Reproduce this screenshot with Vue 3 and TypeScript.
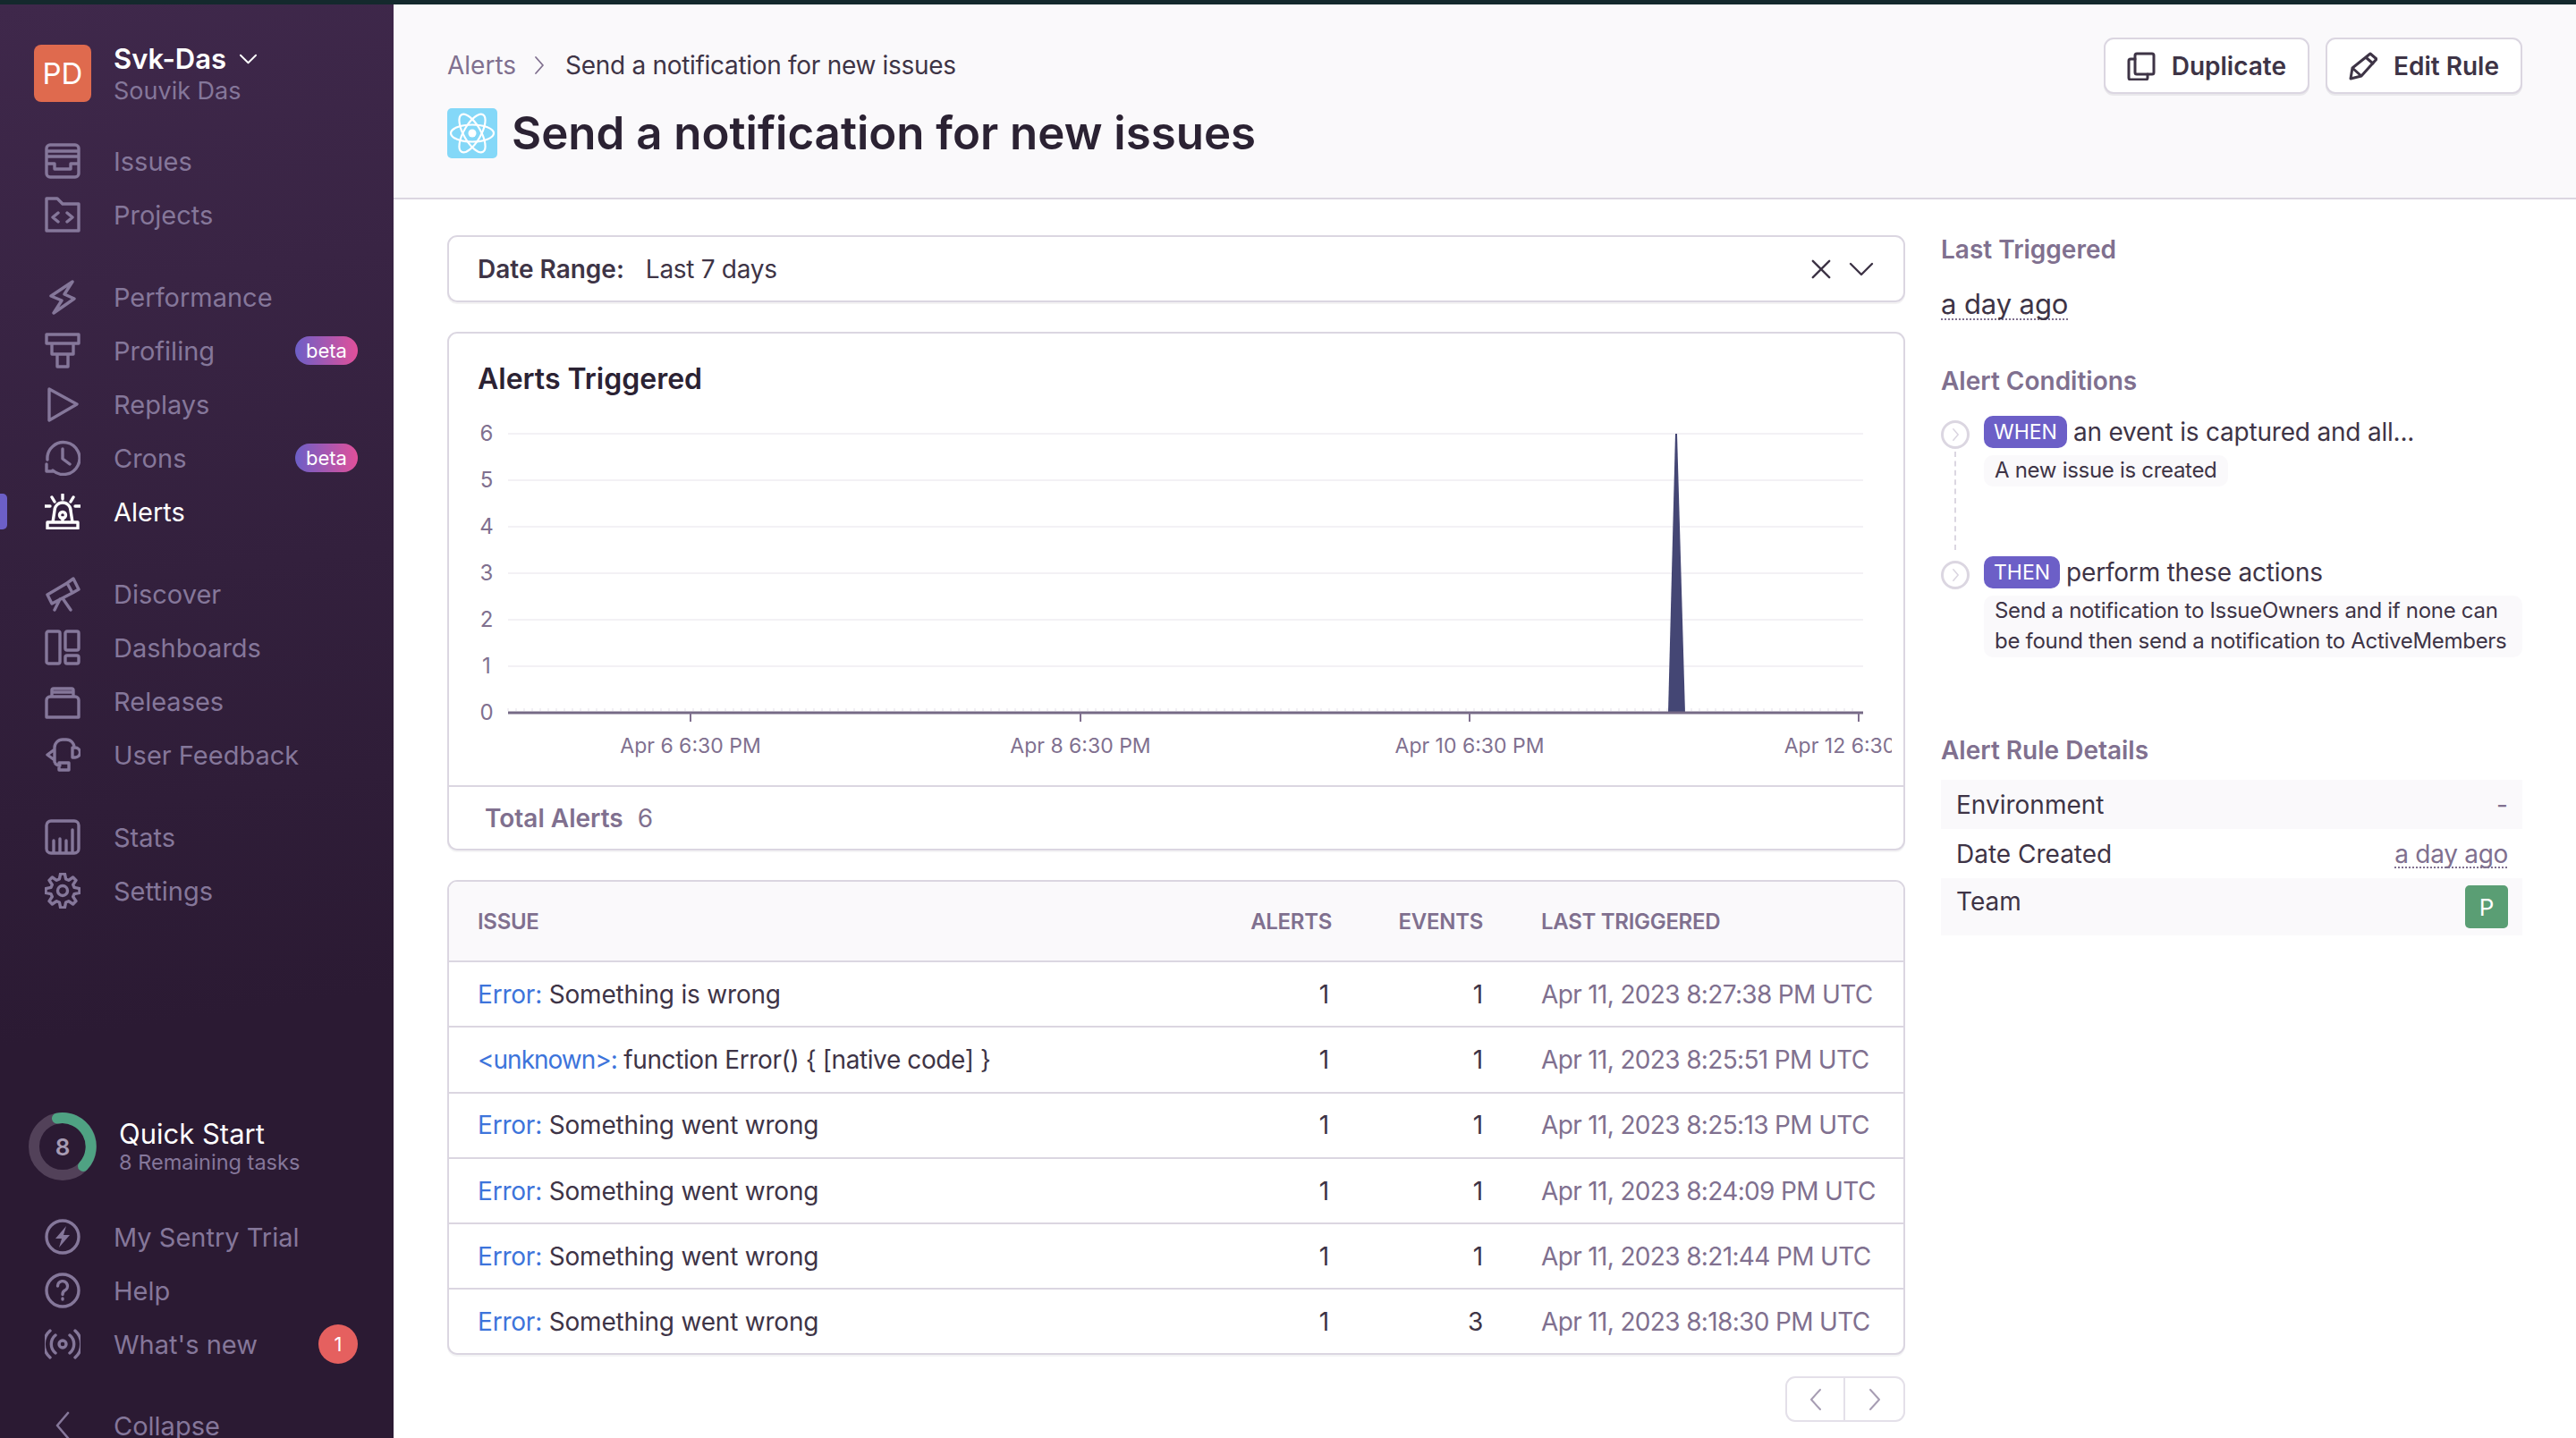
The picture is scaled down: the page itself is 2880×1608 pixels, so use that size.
<script setup lang="ts">
interface NavItem {
  label: string;
  d: string;
  fill?: string;
  dot?: boolean;
  badge?: string;
  active?: boolean;
}

// gear outline for the settings row, easier to compute than to write out
function gearPath(cx: number, cy: number, teeth: number, outer: number, inner: number): string {
  const pts: string[] = [];
  const step = (Math.PI * 2) / teeth;
  for (let i = 0; i < teeth; i++) {
    const a = i * step - Math.PI / 2;
    const list: [number, number][] = [
      [outer, a - step * 0.16],
      [outer, a + step * 0.16],
      [inner, a + step * 0.34],
      [inner, a + step * 0.66],
    ];
    for (const [r, t] of list) {
      pts.push(`${(cx + r * Math.cos(t)).toFixed(1)} ${(cy + r * Math.sin(t)).toFixed(1)}`);
    }
  }
  return "M" + pts.join("L") + "Z";
}

const groups: NavItem[][] = [
  [
    { label: "Issues", d: "M6 2h28a4 4 0 0 1 4 4v28a4 4 0 0 1-4 4H6a4 4 0 0 1-4-4V6a4 4 0 0 1 4-4zM2 9h36M2 15h36M2 23h9v6h18v-6h9" },
    { label: "Projects", d: "M2 2h12l6 6h18v30H2zM15 18l-6 5 6 5M25 18l6 5-6 5" },
  ],
  [
    { label: "Performance", d: "M31 3L7 19l12 5-9 14 23-16-11-5z" },
    { label: "Profiling", badge: "beta", d: "M2 2h36v10H2zM8 12v12h24V12M14 24v14h12V24" },
    { label: "Replays", d: "M5 3l31 17L5 38z" },
    { label: "Crons", badge: "beta", d: "M3 22A18 18 0 1 1 9 34M2 27v8h8M20 10v11l8 6" },
    { label: "Alerts", active: true, d: "M20 1v5M8 4l3 5M32 4l-3 5M0 14h6M34 14h6M9 32l2-13a9 9 0 0 1 18 0l2 13M3 32h34v7H3zM20 32v-5", dot: true },
  ],
  [
    { label: "Discover", d: "M3 21L25 8l6 11L8 31zM25 8l7-5 6 12-7 4M17 26l-6 12M20 25l9 13" },
    { label: "Dashboards", d: "M4 2h11a2 2 0 0 1 2 2v32a2 2 0 0 1-2 2H4a2 2 0 0 1-2-2V4a2 2 0 0 1 2-2zM25 2h11a2 2 0 0 1 2 2v17a2 2 0 0 1-2 2H25a2 2 0 0 1-2-2V4a2 2 0 0 1 2-2zM25 29h11a2 2 0 0 1 2 2v5a2 2 0 0 1-2 2H25a2 2 0 0 1-2-2v-5a2 2 0 0 1 2-2z" },
    { label: "Releases", d: "M6 15h28a4 4 0 0 1 4 4v19H2V19a4 4 0 0 1 4-4zM8 15V8a2 2 0 0 1 2-2h20a2 2 0 0 1 2 2v7M9 10h22" },
    { label: "User Feedback", d: "M11 28V12a9 9 0 0 1 9-9h4a9 9 0 0 1 9 9M11 14L3 20l8 6M31 12h3a5 5 0 0 1 0 11h-3zM11 28a6 6 0 0 0 6 4M16 29h11v8H16z" },
  ],
  [
    { label: "Stats", d: "M7 2h26a5 5 0 0 1 5 5v26a5 5 0 0 1-5 5H7a5 5 0 0 1-5-5V7a5 5 0 0 1 5-5zM10 38V24M17 38V22M24 38V24M31 38V12" },
    { label: "Settings", d: gearPath(20, 20, 8, 19, 13.5) + "M20 14.5a5.5 5.5 0 1 1 0 11a5.5 5.5 0 0 1 0-11z" },
  ],
];

const bottomNav: NavItem[] = [
  { label: "My Sentry Trial", d: "M20 2a18 18 0 1 1 0 36a18 18 0 0 1 0-36z", fill: "M24 8L12 22h7l-3 10 12-14h-7z" },
  { label: "Help", d: "M20 2a18 18 0 1 1 0 36a18 18 0 0 1 0-36zM14.5 15a5.5 5.5 0 1 1 8 5c-2 1-2.5 2.5-2.5 4.500M20 29v1" },
  { label: "What's new", badge: "1", d: "M20 16a4 4 0 1 1 0 8a4 4 0 0 1 0-8zM12 10a13 13 0 0 0 0 20M28 10a13 13 0 0 1 0 20M6 5a20 20 0 0 0 0 30M34 5a20 20 0 0 1 0 30" },
];

const rows = [
  { kind: "Error:", msg: "Something is wrong", alerts: 1, events: 1, date: "Apr 11, 2023 8:27:38 PM UTC" },
  { kind: "<unknown>:", msg: "function Error() { [native code] }", alerts: 1, events: 1, date: "Apr 11, 2023 8:25:51 PM UTC" },
  { kind: "Error:", msg: "Something went wrong", alerts: 1, events: 1, date: "Apr 11, 2023 8:25:13 PM UTC" },
  { kind: "Error:", msg: "Something went wrong", alerts: 1, events: 1, date: "Apr 11, 2023 8:24:09 PM UTC" },
  { kind: "Error:", msg: "Something went wrong", alerts: 1, events: 1, date: "Apr 11, 2023 8:21:44 PM UTC" },
  { kind: "Error:", msg: "Something went wrong", alerts: 1, events: 3, date: "Apr 11, 2023 8:18:30 PM UTC" },
];

const yLabels = [6, 5, 4, 3, 2, 1, 0];
const yFor = (v: number) => 797 - v * 52;
const xTicks = [
  { x: 773, label: "Apr 6 6:30 PM" },
  { x: 1209, label: "Apr 8 6:30 PM" },
  { x: 1644, label: "Apr 10 6:30 PM" },
  { x: 2079, label: "Apr 12 6:30 PM" },
];
const minorTicks = Array.from({ length: 168 }, (_, i) => 569 + i * 9);
</script>

<template>
  <div class="screen">
    <div class="top-strip"></div>
    <div class="shell">
      <aside class="sidebar">
        <div class="org">
          <div class="org-avatar">PD</div>
          <div class="org-text">
            <div class="org-name">
              Svk-Das
              <svg class="org-chevron" viewBox="0 0 24 14" fill="none" stroke="currentColor" stroke-width="2.2" stroke-linecap="round" stroke-linejoin="round">
                <polyline points="2 2 12 12 22 2" />
              </svg>
            </div>
            <div class="org-user">Souvik Das</div>
          </div>
        </div>

        <nav class="nav">
          <div v-for="(group, gi) in groups" :key="gi" class="nav-group">
            <div v-for="item in group" :key="item.label" class="nav-row" :class="{ 'is-active': item.active }">
              <span v-if="item.active" class="active-bar"></span>
              <svg class="nav-icon" viewBox="0 0 40 40" fill="none" stroke="currentColor" stroke-width="3.400" stroke-linecap="round" stroke-linejoin="round">
                <path :d="item.d" />
                <circle v-if="item.dot" cx="20" cy="24" r="3.500" />
              </svg>
              <span class="nav-label">{{ item.label }}</span>
              <span v-if="item.badge" class="beta">{{ item.badge }}</span>
            </div>
          </div>
        </nav>

        <div class="spacer"></div>

        <div class="quick-start">
          <div class="ring">
            <svg viewBox="0 0 76 76" width="76" height="76" fill="none" stroke-width="12">
              <circle cx="38" cy="38" r="32" stroke="#524159" />
              <path d="M32 6.600A32 32 0 0 1 61 60" stroke="#4fa283" stroke-linecap="round" />
            </svg>
            <span class="ring-num">8</span>
          </div>
          <div class="qs-text">
            <div class="qs-title">Quick Start</div>
            <div class="qs-sub">8 Remaining tasks</div>
          </div>
        </div>

        <div class="nav-group">
          <div v-for="item in bottomNav" :key="item.label" class="nav-row">
            <svg class="nav-icon" viewBox="0 0 40 40" fill="none" stroke="currentColor" stroke-width="3.400" stroke-linecap="round" stroke-linejoin="round">
              <path :d="item.d" />
              <path v-if="item.fill" :d="item.fill" fill="currentColor" stroke="none" />
            </svg>
            <span class="nav-label">{{ item.label }}</span>
            <span v-if="item.badge" class="count">{{ item.badge }}</span>
          </div>
        </div>

        <div class="nav-row collapse">
          <svg class="nav-icon" viewBox="0 0 40 40" fill="none" stroke="currentColor" stroke-width="2.600" stroke-linecap="round" stroke-linejoin="round">
            <polyline points="26 6 14 20 26 34" />
          </svg>
          <span class="nav-label">Collapse</span>
        </div>
      </aside>

      <main class="main">
        <header class="page-head">
          <div>
            <div class="crumbs">
              <span class="crumb-link">Alerts</span>
              <svg class="crumb-sep" viewBox="0 0 14 24" fill="none" stroke="currentColor" stroke-width="1.800" stroke-linecap="round" stroke-linejoin="round">
                <polyline points="3 3 11 12 3 21" />
              </svg>
              <span class="crumb-current">Send a notification for new issues</span>
            </div>
            <div class="title-row">
              <div class="project-icon">
                <svg viewBox="0 0 56 56" width="56" height="56" fill="none" stroke="#fff" stroke-width="2.200">
                  <ellipse cx="28" cy="28" rx="24" ry="9.500" />
                  <ellipse cx="28" cy="28" rx="24" ry="9.500" transform="rotate(60 28 28)" />
                  <ellipse cx="28" cy="28" rx="24" ry="9.500" transform="rotate(120 28 28)" />
                  <circle cx="28" cy="28" r="4.500" fill="#fff" stroke="none" />
                </svg>
              </div>
              <h1 class="title">Send a notification for new issues</h1>
            </div>
          </div>
          <div class="head-actions">
            <button type="button" class="btn">
              <svg class="btn-icon" viewBox="0 0 32 32" fill="none" stroke="currentColor" stroke-width="3" stroke-linecap="round" stroke-linejoin="round">
                <path d="M11 2h17a2 2 0 0 1 2 2v19a2 2 0 0 1-2 2H11a2 2 0 0 1-2-2V4a2 2 0 0 1 2-2z" />
                <path d="M9 8H4a2 2 0 0 0-2 2v19a2 2 0 0 0 2 2h17a2 2 0 0 0 2-2v-4" />
              </svg>
              Duplicate
            </button>
            <button type="button" class="btn">
              <svg class="btn-icon" viewBox="0 0 32 32" fill="none" stroke="currentColor" stroke-width="3" stroke-linecap="round" stroke-linejoin="round">
                <path d="M24 2l7 6-17 19-12 3 2-12zM4 18l10 9M20 7l7 6" />
              </svg>
              Edit Rule
            </button>
          </div>
        </header>

        <div class="page-body">
          <section class="left-col">
            <div class="date-range">
              <strong>Date Range:</strong>
              <span class="date-value">Last 7 days</span>
              <svg class="date-x" viewBox="0 0 24 24" fill="none" stroke="currentColor" stroke-width="2.600" stroke-linecap="round">
                <path d="M2 2l20 20M22 2L2 22" />
              </svg>
              <svg class="date-down" viewBox="0 0 28 16" fill="none" stroke="currentColor" stroke-width="2.400" stroke-linecap="round" stroke-linejoin="round">
                <polyline points="2 2 14 14 26 2" />
              </svg>
            </div>

            <div class="card chart-card">
              <h2 class="chart-title">Alerts Triggered</h2>
              <svg class="chart" viewBox="503 460 1613 418" width="1613" height="418">
                <line v-for="v in yLabels.slice(0, 6)" :key="v" x1="569" x2="2084" :y1="yFor(v)" :y2="yFor(v)" stroke="#f3f1f5" stroke-width="2" />
                <text v-for="v in yLabels" :key="'y' + v" x="545" :y="yFor(v) + 8" text-anchor="middle" class="chart-text">{{ v }}</text>
                <line v-for="x in minorTicks" :key="x" :x1="x" :x2="x" y1="792" y2="795" stroke="#e5e1ea" stroke-width="1" />
                <path d="M1866 797L1874 485h2L1885 797z" fill="#444674" />
                <line x1="569" x2="2084" y1="797" y2="797" stroke="#766a86" stroke-width="3" />
                <g v-for="t in xTicks" :key="t.x">
                  <line :x1="t.x" :x2="t.x" y1="797" y2="807" stroke="#80708f" stroke-width="2" />
                  <text :x="t.x" y="842" text-anchor="middle" class="chart-text chart-text-x">{{ t.label }}</text>
                </g>
              </svg>
              <div class="chart-foot">
                <span class="foot-label">Total Alerts</span>
                <span class="foot-num">6</span>
              </div>
            </div>

            <div class="card issues">
              <div class="issues-row issues-head">
                <div>Issue</div>
                <div class="num">Alerts</div>
                <div class="num">Events</div>
                <div class="when">Last Triggered</div>
              </div>
              <div v-for="(row, i) in rows" :key="i" class="issues-row">
                <div :class="{ tight: row.kind.length > 6 }"><span class="kind">{{ row.kind }}</span> {{ row.msg }}</div>
                <div class="num">{{ row.alerts }}</div>
                <div class="num">{{ row.events }}</div>
                <div class="when when-date">{{ row.date }}</div>
              </div>
            </div>

            <div class="pager">
              <button type="button" class="page-btn">
                <svg viewBox="0 0 16 26" width="16" height="26" fill="none" stroke="currentColor" stroke-width="2" stroke-linecap="round" stroke-linejoin="round"><polyline points="13 2 3 13 13 24" /></svg>
              </button>
              <button type="button" class="page-btn">
                <svg viewBox="0 0 16 26" width="16" height="26" fill="none" stroke="currentColor" stroke-width="2" stroke-linecap="round" stroke-linejoin="round"><polyline points="3 2 13 13 3 24" /></svg>
              </button>
            </div>
          </section>

          <section class="right-col">
            <h3 class="side-title">Last Triggered</h3>
            <div class="ago-big"><span class="dotted">a day ago</span></div>

            <h3 class="side-title conditions-title">Alert Conditions</h3>
            <div class="step step-when">
              <div class="rail">
                <span class="rail-dot">
                  <svg viewBox="0 0 10 18" width="9" height="16" fill="none" stroke="currentColor" stroke-width="1.800" stroke-linecap="round" stroke-linejoin="round"><polyline points="2 2 8 9 2 16" /></svg>
                </span>
                <span class="rail-line"></span>
              </div>
              <div>
                <div class="step-head"><span class="pill">WHEN</span> an event is captured and all...</div>
                <div class="step-box">A new issue is created</div>
              </div>
            </div>
            <div class="step">
              <div class="rail">
                <span class="rail-dot">
                  <svg viewBox="0 0 10 18" width="9" height="16" fill="none" stroke="currentColor" stroke-width="1.800" stroke-linecap="round" stroke-linejoin="round"><polyline points="2 2 8 9 2 16" /></svg>
                </span>
              </div>
              <div>
                <div class="step-head"><span class="pill">THEN</span> perform these actions</div>
                <div class="step-box step-box-wide">Send a notification to IssueOwners and if none can<br />be found then send a notification to ActiveMembers</div>
              </div>
            </div>

            <h3 class="side-title details-title">Alert Rule Details</h3>
            <div class="detail-row is-striped">
              <span>Environment</span><span class="detail-val">-</span>
            </div>
            <div class="detail-row">
              <span>Date Created</span><span class="detail-val dotted">a day ago</span>
            </div>
            <div class="detail-row detail-team is-striped">
              <span>Team</span><span class="team-badge">P</span>
            </div>
          </section>
        </div>
      </main>
    </div>
  </div>
</template>

<style>
html,
body {
  margin: 0;
  background: #fff;
  overflow: hidden;
}
</style>

<style scoped>
.screen {
  width: 2880px;
  height: 1608px;
  display: flex;
  flex-direction: column;
  overflow: hidden;
  font-family: Inter, "Open Sans", sans-serif;
  color: #3e3446;
  font-size: 28px;
}

.top-strip {
  flex: 0 0 5px;
  background: #14292d;
}

.shell {
  flex: 1;
  display: flex;
  min-height: 0;
}

/* sidebar */
.sidebar {
  flex: 0 0 440px;
  display: flex;
  flex-direction: column;
  padding-top: 41px;
  box-sizing: border-box;
  background: linear-gradient(172deg, #3f284b 0%, #33203d 40%, #2b1a33 70%, #2b1a33 100%);
  color: #85779a;
}

.org {
  display: flex;
  align-items: center;
  gap: 25px;
  padding-left: 38px;
  margin-bottom: 32px;
}

.org-avatar {
  width: 64px;
  height: 64px;
  border-radius: 8px;
  background: #df6a4e;
  color: #fff;
  font-size: 33px;
  display: flex;
  align-items: center;
  justify-content: center;
}

.org-text {
  margin: 2px 0 -2px;
}

.org-name {
  display: flex;
  align-items: center;
  gap: 14px;
  font-size: 31px;
  font-weight: 600;
  line-height: 36px;
  color: #fff;
}

.org-chevron {
  width: 21px;
  height: 12px;
}

.org-user {
  font-size: 27px;
  line-height: 36px;
}

.nav-group {
  display: flex;
  flex-direction: column;
  margin-bottom: 32px;
}

.nav-row {
  position: relative;
  display: flex;
  align-items: center;
  height: 60px;
  gap: 37px;
  padding: 0 40px 0 50px;
  font-size: 29px;
}

.nav-row.is-active {
  color: #fff;
}

.active-bar {
  position: absolute;
  left: 0;
  top: 10px;
  width: 8px;
  height: 40px;
  background: #6c5fc7;
  border-radius: 0 5px 5px 0;
}

.nav-icon {
  flex: 0 0 40px;
  width: 40px;
  height: 40px;
}

.beta {
  margin-left: auto;
  width: 70px;
  height: 32px;
  border-radius: 16px;
  background: linear-gradient(90deg, #6c5fc7, #e1509a);
  color: #fff;
  font-size: 22px;
  display: flex;
  align-items: center;
  justify-content: center;
}

.count {
  margin-left: auto;
  width: 44px;
  height: 44px;
  border-radius: 50%;
  background: #e5605f;
  color: #fff;
  font-size: 22px;
  display: flex;
  align-items: center;
  justify-content: center;
}

.spacer {
  flex: 1;
}

.quick-start {
  display: flex;
  align-items: center;
  gap: 25px;
  padding-left: 32px;
  margin-bottom: 33px;
}

.ring {
  position: relative;
  width: 76px;
  height: 76px;
}

.ring-num {
  position: absolute;
  inset: 0;
  display: flex;
  align-items: center;
  justify-content: center;
  font-size: 26px;
  font-weight: 600;
  color: #a79bb3;
}

.qs-text {
  padding-top: 3px;
}

.qs-title {
  font-size: 31px;
  line-height: 32px;
  color: #fff;
}

.qs-sub {
  font-size: 23.500px;
  line-height: 32px;
}

.collapse {
  margin-bottom: -16px;
}

.sidebar > .nav-group {
  margin-bottom: 31px;
}

/* page header */
.main {
  flex: 1;
  min-width: 0;
  display: flex;
  flex-direction: column;
}

.page-head {
  box-sizing: border-box;
  height: 218px;
  flex: 0 0 218px;
  display: flex;
  justify-content: space-between;
  padding: 37px 60px 0;
  background: #faf9fb;
  border-bottom: 2px solid #dbd6e1;
}

.crumbs {
  display: flex;
  align-items: center;
  height: 62px;
  gap: 19px;
  font-size: 28px;
  color: #3e3446;
}

.crumb-link {
  color: #80708f;
}

.crumb-sep {
  width: 14px;
  height: 24px;
  color: #80708f;
  margin-right: 3px;
}

.crumb-current {
  letter-spacing: -0.3px;
}

.title-row {
  display: flex;
  align-items: center;
  gap: 16px;
  margin-top: 17px;
}

.project-icon {
  width: 56px;
  height: 56px;
  border-radius: 5px;
  background: #84d8f8;
}

.title {
  margin: 0;
  font-size: 51px;
  line-height: 56px;
  font-weight: 600;
  color: #2b2233;
}

.head-actions {
  display: flex;
  gap: 18px;
}

.btn {
  box-sizing: border-box;
  height: 63px;
  display: inline-flex;
  align-items: center;
  gap: 18px;
  padding: 0 24px;
  font: 600 28px Inter, sans-serif;
  color: #3e3446;
  background: #fff;
  border: 2px solid #dbd6e1;
  border-radius: 11px;
  box-shadow: 0 2px 0 rgba(43, 34, 51, 0.08);
}

.btn-icon {
  width: 32px;
  height: 32px;
}

/* page body */
.page-body {
  flex: 1;
  min-height: 0;
  display: grid;
  grid-template-columns: 1630px 650px;
  gap: 40px;
  padding: 40px 60px 0;
  background: #fff;
}

.date-range {
  box-sizing: border-box;
  height: 75px;
  display: flex;
  align-items: center;
  padding: 0 33px 0 32px;
  border: 2px solid #dbd6e1;
  border-radius: 11px;
  box-shadow: 0 2px 0 rgba(43, 34, 51, 0.06);
}

.date-range strong {
  font-weight: 600;
}

.date-value {
  margin-left: 24px;
  letter-spacing: -0.3px;
}

.date-x {
  margin-left: auto;
  margin-right: -2px;
  width: 22px;
  height: 22px;
}

.date-down {
  margin-left: 22px;
  width: 28px;
  height: 16px;
}

.card {
  border: 2px solid #dbd6e1;
  border-radius: 11px;
  box-shadow: 0 2px 0 rgba(43, 34, 51, 0.05);
  overflow: hidden;
  background: #fff;
}

.chart-card {
  box-sizing: border-box;
  height: 580px;
  margin-top: 33px;
}

.chart-title {
  margin: 31px 0 16px 32px;
  font-size: 32px;
  line-height: 40px;
  font-weight: 600;
  color: #2b2233;
}

.chart {
  display: block;
}

.chart-text {
  font-size: 24px;
  font-family: Inter, sans-serif;
  fill: #80708f;
}

.chart-text-x {
  font-size: 23px;
}

.chart-foot {
  box-sizing: border-box;
  height: 71px;
  display: flex;
  align-items: center;
  gap: 16px;
  padding-left: 40px;
  border-top: 2px solid #dbd6e1;
  color: #80708f;
}

.foot-label {
  font-weight: 600;
}

.issues {
  box-sizing: border-box;
  height: 531px;
  margin-top: 33px;
}

.issues-row {
  box-sizing: border-box;
  display: grid;
  grid-template-columns: minmax(0, 1fr) 197px 172px 470px;
  align-items: center;
  height: 73.300px;
  padding-left: 32px;
  border-top: 2px solid #dbd6e1;
  letter-spacing: -0.2px;
}

.issues-head {
  height: 88px;
  border-top: 0;
  background: #faf9fb;
  color: #80708f;
  font-size: 24px;
  font-weight: 600;
  letter-spacing: -0.3px;
  text-transform: uppercase;
}

.issues-head .num:nth-child(2) {
  padding-right: 0;
  margin-right: -3px;
}

.num {
  text-align: right;
}

.when {
  padding-left: 65px;
}

.when-date {
  color: #80708f;
  letter-spacing: -0.65px;
}

.kind {
  color: #3d74db;
}

.tight {
  letter-spacing: -0.4px;
}

.tight .kind {
  letter-spacing: -1px;
}

.pager {
  display: flex;
  justify-content: flex-end;
  margin-top: 24px;
}

.page-btn {
  box-sizing: border-box;
  width: 67px;
  height: 51px;
  display: flex;
  align-items: center;
  justify-content: center;
  background: #fff;
  color: #a79db3;
  border: 2px solid #e4e0e9;
  border-radius: 11px 0 0 11px;
}

.page-btn + .page-btn {
  border-left: 0;
  border-radius: 0 11px 11px 0;
}

/* right column */
.side-title {
  margin: 0;
  font-size: 28px;
  line-height: 32px;
  font-weight: 600;
  color: #80708f;
}

.ago-big {
  margin-top: 25px;
  font-size: 31px;
  line-height: 40px;
  letter-spacing: -0.1px;
}

.dotted {
  text-decoration: underline dotted 2px #80708f;
  text-decoration-skip-ink: none;
  text-underline-offset: 5px;
}

.conditions-title {
  margin-top: 50px;
}

.step {
  display: grid;
  grid-template-columns: 48px minmax(0, 1fr);
}

.step-when {
  height: 157px;
  margin-top: 23px;
}

.rail {
  display: flex;
  flex-direction: column;
  align-items: flex-start;
}

.rail-dot {
  box-sizing: border-box;
  width: 32px;
  height: 32px;
  margin-top: 5px;
  border: 3px solid #dbd6e1;
  border-radius: 50%;
  color: #dbd6e1;
  display: flex;
  align-items: center;
  justify-content: center;
}

.rail-line {
  height: 110px;
  margin: 3px 0 0 15px;
  border-left: 2px dashed #dbd6e1;
}

.step-head {
  height: 36px;
  display: flex;
  align-items: center;
  gap: 7px;
  font-size: 28px;
  letter-spacing: -0.2px;
}

.pill {
  height: 36px;
  padding: 0 11px;
  display: flex;
  align-items: center;
  border-radius: 10px;
  background: #6c5fc7;
  color: #fff;
  font-size: 23px;
  letter-spacing: 0;
}

.step-box {
  display: inline-block;
  margin-top: 8px;
  padding: 0 12px 1px;
  line-height: 34px;
  font-size: 24px;
  letter-spacing: -0.3px;
  border-radius: 10px;
  background: #faf9fb;
}

.step-box-wide {
  display: block;
  padding-right: 0;
  white-space: nowrap;
}

.details-title {
  margin-top: 88px;
  margin-bottom: 17px;
}

.detail-row {
  box-sizing: border-box;
  height: 55px;
  display: flex;
  justify-content: space-between;
  align-items: center;
  padding: 0 16px 0 17px;
}

.is-striped {
  background: #faf9fb;
}

.detail-val {
  color: #80708f;
}

.detail-val.dotted {
  letter-spacing: -0.3px;
}

.detail-team {
  height: 64px;
  align-items: flex-start;
  padding-top: 9px;
}

.team-badge {
  width: 48px;
  height: 48px;
  margin-top: -1px;
  border-radius: 5px;
  background: #5a9e74;
  color: #fff;
  font-size: 26px;
  display: flex;
  align-items: center;
  justify-content: center;
}
</style>
